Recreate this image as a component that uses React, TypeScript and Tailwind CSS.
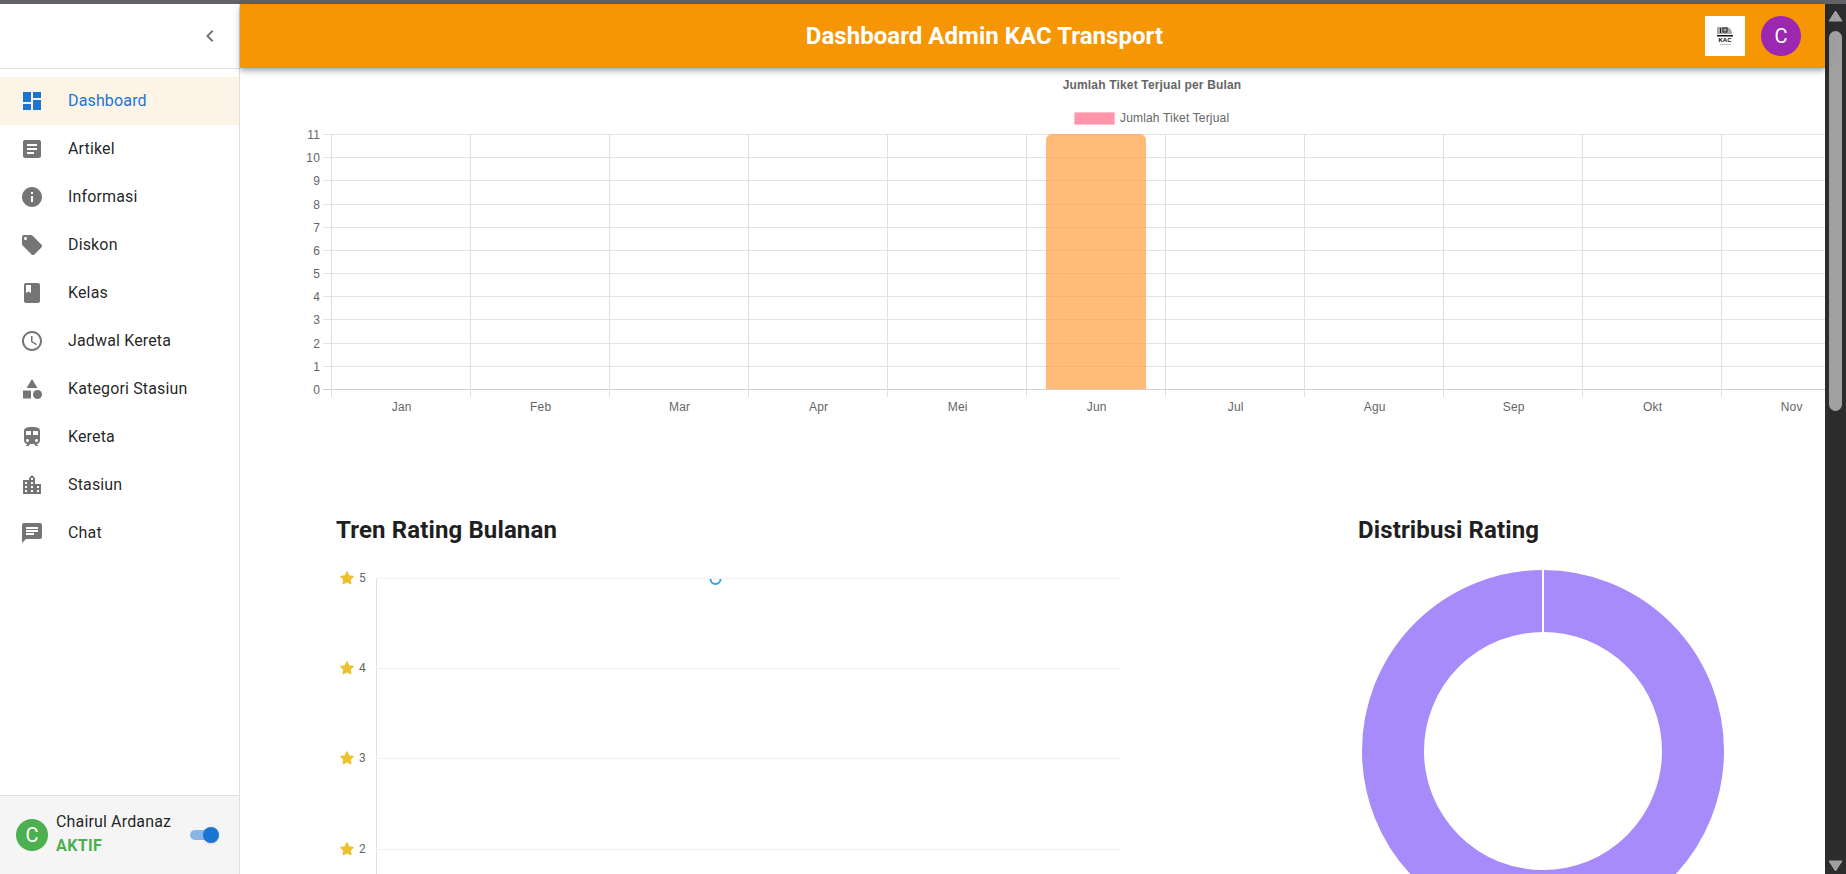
import React from 'react'
import {
  MdAccessTime,
  MdArticle,
  MdBook,
  MdCategory,
  MdChat,
  MdChevronLeft,
  MdDashboard,
  MdInfo,
  MdLocalOffer,
  MdLocationCity,
  MdTrain,
} from 'react-icons/md'

const navItems = [
  { label: 'Dashboard', icon: MdDashboard, active: true },
  { label: 'Artikel', icon: MdArticle },
  { label: 'Informasi', icon: MdInfo },
  { label: 'Diskon', icon: MdLocalOffer },
  { label: 'Kelas', icon: MdBook },
  { label: 'Jadwal Kereta', icon: MdAccessTime },
  { label: 'Kategori Stasiun', icon: MdCategory },
  { label: 'Kereta', icon: MdTrain },
  { label: 'Stasiun', icon: MdLocationCity },
  { label: 'Chat', icon: MdChat },
]

const months = ['Jan', 'Feb', 'Mar', 'Apr', 'Mei', 'Jun', 'Jul', 'Agu', 'Sep', 'Okt', 'Nov']

function Sidebar(): React.ReactElement {
  return (
    <aside className="w-[240px] shrink-0 flex flex-col border-r border-r-[#e0e0e0] bg-white">
      <div className="h-[65px] shrink-0 flex items-center justify-end pr-[17px] border-b border-b-[#e0e0e0]">
        <MdChevronLeft size={24} className="text-[#757575]" />
      </div>
      <nav className="flex-1 pt-2">
        {navItems.map((item) => {
          const Icon = item.icon
          return (
            <div key={item.label} className={`h-[48px] flex items-center px-5 ${item.active ? 'bg-[#fdf3e7]' : ''}`}>
              <div className="w-[48px] shrink-0">
                <Icon size={24} className={item.active ? 'text-[#1976d2]' : 'text-[#757575]'} />
              </div>
              <span className={`text-base tracking-[0.15px] ${item.active ? 'text-[#1976d2]' : 'text-[#000000de]'}`}>{item.label}</span>
            </div>
          )
        })}
      </nav>
      <div className="h-[79px] shrink-0 flex items-center pl-4 pr-[23px] bg-[#f5f5f5] border-t border-t-[#e0e0e0]">
        <div className="w-[32px] h-[32px] rounded-full bg-[#4caf50] text-white flex items-center justify-center text-xl mr-2">C</div>
        <div className="flex-1 leading-[24px] pb-[3px]">
          <div className="text-base tracking-[0.15px] text-[#000000de]">Chairul Ardanaz</div>
          <div className="text-base tracking-[0.4px] font-bold text-[#4caf50]">AKTIF</div>
        </div>
        <div className="relative w-[26px] h-[10px] rounded-full bg-[#8ab6e6]">
          <div className="absolute right-[-3px] top-[-3px] w-[16px] h-[16px] rounded-full bg-[#1976d2] shadow-sm" />
        </div>
      </div>
    </aside>
  )
}

function Header(): React.ReactElement {
  return (
    <header className="relative z-10 h-[64px] shrink-0 flex items-center px-6 bg-[#f69605] shadow-[0_2px_4px_-1px_rgba(0,0,0,0.2),0_4px_5px_0_rgba(0,0,0,0.14),0_1px_10px_0_rgba(0,0,0,0.12)]">
      <h1 className="flex-1 text-center text-2xl tracking-[0.04px] font-bold text-white">Dashboard Admin KAC Transport</h1>
      <div className="w-[40px] h-[40px] bg-white flex flex-col items-center justify-center mr-4">
        <svg width="16" height="10" viewBox="0 0 16 10" className="shrink-0">
          <path d="M0 1 Q0 0 1 0 H10 Q14 1 15 5 V7 H0 Z" fill="#a8a8a8" />
          <rect x="3" y="1" width="1" height="5" fill="#222" />
          <rect x="6" y="1" width="4" height="4" fill="none" stroke="#222" />
          <rect x="0" y="8" width="16" height="1.5" fill="#111" />
        </svg>
        <span className="text-[6px] leading-[7px] font-bold text-black [font-family:'Liberation_Sans',sans-serif]">KAC</span>
        <div className="w-[11px] h-[1px] bg-[#c4c4c4]" />
      </div>
      <div className="w-[40px] h-[40px] rounded-full bg-[#9c27b0] text-white flex items-center justify-center text-xl">C</div>
    </header>
  )
}

// chart.js style bar chart, drawn 1:1 with the reference canvas
function TicketChart(): React.ReactElement {
  const left = 91
  const colW = 139
  const top = 66
  const rowH = 23.18
  const rows = Array.from({ length: 12 }, (_, i) => i)
  return (
    <svg width="1585" height="350" viewBox="0 0 1585 350" className="block shrink-0" fontFamily="'Liberation Sans', sans-serif" fontSize="12" fill="#666" letterSpacing="0.17">
      <text x="912" y="21" textAnchor="middle" fontWeight="bold">Jumlah Tiket Terjual per Bulan</text>
      <rect x="834.5" y="44.5" width="40" height="12" fill="#ff94aa" stroke="#ffc0cd" />
      <text x="880" y="54">Jumlah Tiket Terjual</text>
      {rows.map((n) => {
        const y = Math.round(top + n * rowH) + 0.5
        return (
          <g key={n}>
            <line x1={left - 8} x2="1585" y1={y} y2={y} stroke={n === 11 ? '#cfcfcf' : '#e3e3e3'} />
            <text x={left - 11} y={y + 4} textAnchor="end">{11 - n}</text>
          </g>
        )
      })}
      {months.map((m, i) => {
        const x = Math.round(left + i * colW) + 0.5
        return (
          <g key={m}>
            <line x1={x} x2={x} y1={top} y2={top + 263} stroke="#e0e0e0" />
            <text x={x + colW / 2 + 0.7} y={top + 276.5} textAnchor="middle">{m}</text>
          </g>
        )
      })}
      <path d="M806 321 V72 a6 6 0 0 1 6 -6 H900 a6 6 0 0 1 6 6 V321 Z" fill="#ff9f40" fillOpacity="0.7" />
    </svg>
  )
}

function Star(): React.ReactElement {
  return (
    <path d="M0 -6 L1.9 -2 L6 -1.5 L3 1.4 L3.7 5.5 L0 3.5 L-3.7 5.5 L-3 1.4 L-6 -1.5 L-1.9 -2 Z" fill="#edc02f" stroke="#edc02f" strokeWidth="1.5" strokeLinejoin="round" />
  )
}

function RatingChart(): React.ReactElement {
  const ticks = [
    { v: 5, y: 578.5 },
    { v: 4, y: 668.5 },
    { v: 3, y: 758.5 },
    { v: 2, y: 849.5 },
  ]
  return (
    <svg width="790" height="314" viewBox="336 560 790 314" className="block" fontFamily="'Roboto', sans-serif" fontSize="12" fill="#666">
      <line x1="376.5" x2="376.5" y1="578" y2="874" stroke="#e0e0e0" />
      {ticks.map((t) => (
        <g key={t.v}>
          <line x1="376" x2="1121" y1={t.y} y2={t.y} stroke="#f2f2f2" />
          <g transform={`translate(347 ${t.y - 0.5})`}>
            <Star />
          </g>
          <text x="359" y={t.y + 3.5}>{t.v}</text>
        </g>
      ))}
      <path d="M710.5 579 a5 5 0 0 0 10 0" fill="#fff" stroke="#36a2eb" strokeWidth="2" />
    </svg>
  )
}

function RatingDonut(): React.ReactElement {
  return (
    <svg width="370" height="314" viewBox="1358 560 370 314" className="block">
      <circle cx="1543" cy="751" r="150" fill="none" stroke="#a78bfa" strokeWidth="62" />
      <line x1="1543" x2="1543" y1="568" y2="632" stroke="#fff" strokeWidth="2" />
    </svg>
  )
}

function Scrollbar(): React.ReactElement {
  return (
    <div className="w-[21px] shrink-0 bg-[#2c2c2c] flex flex-col items-center">
      <svg width="15" height="12" viewBox="0 0 15 12" className="mt-[6px] shrink-0">
        <path d="M7.5 1 L14 11 H1 Z" fill="#a0a0a0" stroke="#a0a0a0" strokeLinejoin="round" />
      </svg>
      <div className="w-[13px] h-[380px] mt-[9px] rounded-full bg-[#a0a0a0]" />
      <div className="flex-1" />
      <svg width="15" height="12" viewBox="0 0 15 12" className="mb-[2px] shrink-0">
        <path d="M7.5 11 L14 1 H1 Z" fill="#a0a0a0" stroke="#a0a0a0" strokeLinejoin="round" />
      </svg>
    </div>
  )
}

export default function App(): React.ReactElement {
  return (
    <div className="w-[1846px] h-[874px] flex flex-col overflow-hidden bg-white font-['Roboto',sans-serif]">
      <div className="h-[4px] shrink-0 bg-[#636367]" />
      <div className="flex-1 flex min-h-0">
        <Sidebar />
        <div className="flex-1 min-w-0 flex flex-col">
          <Header />
          <main className="flex-1 min-h-0 overflow-hidden">
            <TicketChart />
            <div className="flex pl-[96px] pt-[96px]">
              <div className="w-[1022px] shrink-0">
                <h2 className="text-2xl leading-[32px] tracking-[0.13px] font-bold text-[#1f1f1f] mb-[14px]">Tren Rating Bulanan</h2>
                <RatingChart />
              </div>
              <div>
                <h2 className="text-2xl leading-[32px] tracking-[0.13px] font-bold text-[#1f1f1f] mb-[14px]">Distribusi Rating</h2>
                <RatingDonut />
              </div>
            </div>
          </main>
        </div>
        <Scrollbar />
      </div>
    </div>
  )
}
